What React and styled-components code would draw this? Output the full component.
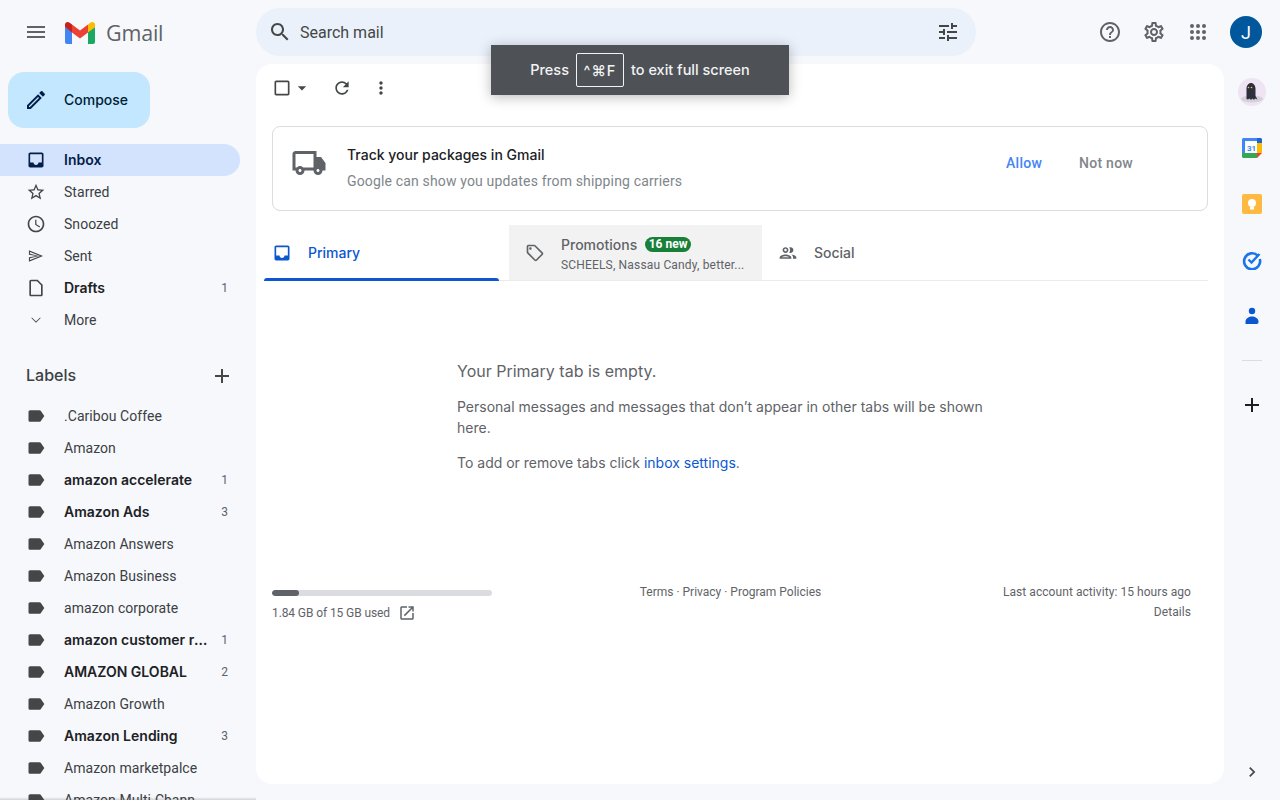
import React from 'react';
import styled, { createGlobalStyle } from 'styled-components';

const FONT = 'Roboto, "Liberation Sans", Arial, sans-serif';
const WIDE_FONT = 'Inter, Roboto, "Liberation Sans", sans-serif';

const PATHS = {
  menu: 'M3 18h18v-2H3v2zm0-5h18v-2H3v2zm0-7v2h18V6H3z',
  search: 'M15.5 14h-.79l-.28-.27C15.41 12.59 16 11.11 16 9.5 16 5.91 13.09 3 9.5 3S3 5.91 3 9.5 5.91 16 9.5 16c1.61 0 3.09-.59 4.23-1.57l.27.28v.79l5 4.99L20.49 19l-4.99-5zm-6 0C7.01 14 5 11.99 5 9.5S7.01 5 9.5 5 14 7.01 14 9.5 11.99 14 9.5 14z',
  tune: 'M3 17v2h6v-2H3zM3 5v2h10V5H3zm10 16v-2h8v-2h-8v-2h-2v6h2zM7 9v2H3v2h4v2h2V9H7zm14 4v-2H11v2h10zm-6-4h2V7h4V5h-4V3h-2v6z',
  help: 'M11 18h2v-2h-2v2zm1-16C6.48 2 2 6.48 2 12s4.48 10 10 10 10-4.48 10-10S17.52 2 12 2zm0 18c-4.41 0-8-3.59-8-8s3.59-8 8-8 8 3.59 8 8-3.59 8-8 8zm0-14c-2.21 0-4 1.79-4 4h2c0-1.1.9-2 2-2s2 .9 2 2c0 2-3 1.75-3 5h2c0-2.25 3-2.5 3-5 0-2.21-1.79-4-4-4z',
  settings: 'M19.43 12.98c.04-.32.07-.64.07-.98 0-.34-.03-.66-.07-.98l2.11-1.65c.19-.15.24-.42.12-.64l-2-3.46c-.09-.16-.26-.25-.44-.25-.06 0-.12.01-.17.03l-2.49 1c-.52-.4-1.08-.73-1.69-.98l-.38-2.65C14.46 2.18 14.25 2 14 2h-4c-.25 0-.46.18-.49.42l-.38 2.65c-.61.25-1.17.59-1.69.98l-2.49-1c-.06-.02-.12-.03-.18-.03-.17 0-.34.09-.43.25l-2 3.46c-.13.22-.07.49.12.64l2.11 1.65c-.04.32-.07.65-.07.98 0 .33.03.66.07.98l-2.11 1.65c-.19.15-.24.42-.12.64l2 3.46c.09.16.26.25.44.25.06 0 .12-.01.17-.03l2.49-1c.52.4 1.08.73 1.69.98l.38 2.65c.03.24.24.42.49.42h4c.25 0 .46-.18.49-.42l.38-2.65c.61-.25 1.17-.59 1.69-.98l2.49 1c.06.02.12.03.18.03.17 0 .34-.09.43-.25l2-3.46c.12-.22.07-.49-.12-.64l-2.11-1.65zm-1.98-1.71c.04.31.05.52.05.73 0 .21-.02.43-.05.73l-.14 1.13.89.7 1.08.84-.7 1.21-1.27-.51-1.04-.42-.9.68c-.43.32-.84.56-1.25.73l-1.06.43-.16 1.13-.2 1.35h-1.4l-.19-1.35-.16-1.13-1.06-.43c-.43-.18-.83-.41-1.23-.71l-.91-.7-1.06.43-1.27.51-.7-1.21 1.08-.84.89-.7-.14-1.13c-.03-.31-.05-.54-.05-.74s.02-.43.05-.73l.14-1.13-.89-.7-1.08-.84.7-1.21 1.27.51 1.04.42.9-.68c.43-.32.84-.56 1.25-.73l1.06-.43.16-1.13.2-1.35h1.39l.19 1.35.16 1.13 1.06.43c.43.18.83.41 1.23.71l.91.7 1.06-.43 1.27-.51.7 1.21-1.07.85-.89.7.14 1.13zM12 8c-2.21 0-4 1.79-4 4s1.79 4 4 4 4-1.79 4-4-1.79-4-4-4zm0 6c-1.1 0-2-.9-2-2s.9-2 2-2 2 .9 2 2-.9 2-2 2z',
  edit: 'M3 17.25V21h3.75L17.81 9.94l-3.75-3.75L3 17.25zM5.92 19H5v-.92l9.06-9.06.92.92L5.92 19zM20.71 5.63l-2.34-2.34c-.2-.2-.45-.29-.71-.29s-.51.1-.7.29l-1.83 1.83 3.75 3.75 1.83-1.83c.39-.39.39-1.02 0-1.41z',
  inbox: 'M19 3H5c-1.1 0-2 .9-2 2v14c0 1.1.9 2 2 2h14c1.1 0 2-.9 2-2V5c0-1.1-.9-2-2-2zm0 12h-4c0 1.66-1.35 3-3 3s-3-1.34-3-3H4.99V5H19v10z',
  star: 'M22 9.24l-7.19-.62L12 2 9.19 8.63 2 9.24l5.46 4.73L5.82 21 12 17.27 18.18 21l-1.63-7.03L22 9.24zM12 15.4l-3.76 2.27 1-4.28-3.32-2.88 4.38-.38L12 6.1l1.71 4.04 4.38.38-3.32 2.88 1 4.28L12 15.4z',
  clock: 'M11.99 2C6.47 2 2 6.48 2 12s4.47 10 9.99 10C17.52 22 22 17.52 22 12S17.52 2 11.99 2zM12 20c-4.42 0-8-3.58-8-8s3.58-8 8-8 8 3.58 8 8-3.58 8-8 8zm.5-13H11v6l5.25 3.15.75-1.23-4.5-2.67z',
  sent: 'M3.5 5.200v5.300L12.500 12l-9 1.500v5.300L20.500 12zM4.800 7.200L16.800 12 4.800 16.800v-2.200l11-2.600-11-2.600z',
  draft: 'M14 2H6c-1.1 0-2 .9-2 2v16c0 1.1.9 2 2 2h12c1.1 0 2-.9 2-2V8l-6-6zm4 18H6V4h7.17L18 8.83V20z',
  more: 'M16.9 8.9L12 13.8 7.1 8.9 6.4 9.6 12 15.2 17.6 9.6z',
  label: 'M17.63 5.84C17.27 5.33 16.67 5 16 5L5 5.01C3.9 5.01 3 5.9 3 7v10c0 1.1.9 1.99 2 1.99L16 19c.67 0 1.27-.33 1.63-.84L22 12l-4.37-6.16z',
  add: 'M19 13h-6v6h-2v-6H5v-2h6V5h2v6h6v2z',
  caret: 'M7 10l5 5 5-5z',
  refresh: 'M17.65 6.35C16.2 4.9 14.21 4 12 4c-4.42 0-7.99 3.58-7.99 8s3.57 8 7.99 8c3.73 0 6.84-2.55 7.73-6h-2.08c-.82 2.33-3.04 4-5.65 4-3.31 0-6-2.69-6-6s2.69-6 6-6c1.66 0 3.14.69 4.22 1.78L13 11h7V4l-2.35 2.35z',
  vert: 'M12 8c1.1 0 2-.9 2-2s-.9-2-2-2-2 .9-2 2 .9 2 2 2zm0 2c-1.1 0-2 .9-2 2s.9 2 2 2 2-.9 2-2-.9-2-2-2zm0 6c-1.1 0-2 .9-2 2s.9 2 2 2 2-.9 2-2-.9-2-2-2z',
  checkbox: 'M19 5v14H5V5h14m0-2H5c-1.1 0-2 .9-2 2v14c0 1.1.9 2 2 2h14c1.1 0 2-.9 2-2V5c0-1.1-.9-2-2-2z',
  truck: 'M20 8h-3V4H3c-1.1 0-2 .9-2 2v11h2c0 1.66 1.34 3 3 3s3-1.34 3-3h6c0 1.66 1.34 3 3 3s3-1.34 3-3h2v-5l-3-4zM6 18c-.55 0-1-.45-1-1s.45-1 1-1 1 .45 1 1-.45 1-1 1zm2.22-3c-.55-.61-1.33-1-2.22-1s-1.67.39-2.22 1H3V6h12v9H8.22zM18 18c-.55 0-1-.45-1-1s.45-1 1-1 1 .45 1 1-.45 1-1 1z',
  tag: 'M21.41 11.41l-8.83-8.83C12.21 2.21 11.7 2 11.17 2H4C2.9 2 2 2.9 2 4v7.17c0 .53.21 1.04.59 1.41l8.83 8.83c.78.78 2.05.78 2.83 0l7.17-7.17c.78-.78.78-2.04-.01-2.83zM12.83 20L4 11.17V4h7.17L20 12.83 12.83 20zM6.5 5C7.33 5 8 5.67 8 6.5S7.33 8 6.5 8 5 7.33 5 6.5 5.67 5 6.5 5z',
  people: 'M9 13.750c-2.340 0-7 1.170-7 3.500V19h14v-1.750c0-2.330-4.660-3.500-7-3.500zM4.340 17c.84-.58 2.870-1.250 4.660-1.250s3.820.67 4.660 1.250H4.340zM9 12c1.930 0 3.500-1.570 3.500-3.500S10.930 5 9 5 5.500 6.570 5.500 8.500 7.070 12 9 12zm0-5c.83 0 1.500.67 1.500 1.500S9.830 10 9 10s-1.500-.67-1.500-1.500S8.170 7 9 7zm7.040 6.810c1.160.84 1.960 1.960 1.960 3.440V19h4v-1.750c0-2.020-3.500-3.170-5.960-3.440zM15 12c1.930 0 3.500-1.570 3.500-3.500S16.930 5 15 5c-.54 0-1.040.13-1.500.35.63.89 1 1.980 1 3.150s-.37 2.260-1 3.150c.46.220.96.350 1.500.350z',
  external: 'M19 19H5V5h7V3H5c-1.11 0-2 .9-2 2v14c0 1.1.89 2 2 2h14c1.1 0 2-.9 2-2v-7h-2v7zM14 3v2h3.59l-9.83 9.83 1.41 1.41L19 6.41V10h2V3h-7z',
  chevron: 'M10 6L8.59 7.41 13.17 12l-4.58 4.59L10 18l6-6z',
};

const GlobalStyle = createGlobalStyle`
  html, body {
    margin: 0;
    height: 100%;
    overflow: hidden;
    background: #f6f8fc;
    font-family: ${FONT};
    color: #202124;
  }
`;

const Svg = styled.svg`
  display: block;
  flex: none;
  fill: ${(p) => p.$color || '#5f6368'};
`;

const Icon = ({ name, size = 24, color }) => (
  <Svg viewBox="0 0 24 24" width={size} height={size} $color={color}>
    <path d={PATHS[name]} />
  </Svg>
);

const Page = styled.div`
  position: relative;
  width: 1280px;
  height: 800px;
  display: flex;
  flex-direction: column;
  overflow: hidden;
`;

/* top bar */
const TopBar = styled.header`
  height: 64px;
  flex: none;
  display: flex;
  align-items: center;
`;

const Brand = styled.div`
  width: 256px;
  flex: none;
  display: flex;
  align-items: center;
  padding-left: 24px;
  box-sizing: border-box;
`;

const LogoMark = styled.svg`
  display: block;
  margin-left: 17px;
  flex: none;
`;

const BrandName = styled.span`
  margin-left: 11px;
  font-size: 21.5px;
  letter-spacing: -0.2px;
  color: #5f6368;
  font-family: "Open Sans", ${FONT};
`;

const SearchBar = styled.div`
  width: 720px;
  height: 48px;
  flex: none;
  border-radius: 24px;
  background: #eaf1fb;
  display: flex;
  align-items: center;
  padding: 0 16px 0 12px;
  box-sizing: border-box;
`;

const SearchText = styled.span`
  flex: 1;
  margin-left: 8px;
  font-size: 16px;
  color: #444746;
`;

const TopActions = styled.div`
  flex: 1;
  display: flex;
  align-items: center;
  justify-content: flex-end;
  padding-right: 18px;
`;

const ActionButton = styled.div`
  width: 44px;
  height: 44px;
  display: flex;
  align-items: center;
  justify-content: center;
`;

const Avatar = styled.div`
  width: 32px;
  height: 32px;
  margin-left: 10px;
  border-radius: 50%;
  background: #00579c;
  color: #fff;
  font-size: 18px;
  display: flex;
  align-items: center;
  justify-content: center;
`;

/* body */
const Body = styled.div`
  flex: 1;
  min-height: 0;
  display: flex;
`;

const Sidebar = styled.nav`
  position: relative;
  width: 256px;
  flex: none;
  overflow: hidden;

  &::after {
    content: '';
    position: absolute;
    left: 0;
    right: 0;
    bottom: 0;
    height: 3px;
    background: linear-gradient(rgba(60, 64, 67, 0), rgba(60, 64, 67, 0.2));
  }
`;

const Compose = styled.div`
  width: 142px;
  height: 56px;
  margin: 8px 0 16px 8px;
  border-radius: 16px;
  background: #c2e7ff;
  display: flex;
  align-items: center;
  padding-left: 16px;
  box-sizing: border-box;
  font-family: ${WIDE_FONT};
  font-size: 14px;
  font-weight: 500;
  color: #001d35;
`;

const ComposeLabel = styled.span`
  margin-left: 16px;
  padding-bottom: 2px;
`;

const RowText = styled.span`
  flex: 1;
  min-width: 0;
  max-width: 147px;
  margin-left: 18px;
  white-space: nowrap;
  overflow: hidden;
  text-overflow: ellipsis;
`;

const Row = styled.div`
  width: 240px;
  height: 32px;
  display: flex;
  align-items: center;
  padding: 0 12px 0 26px;
  box-sizing: border-box;
  border-radius: 0 16px 16px 0;
  font-family: ${(p) => (p.$bold ? WIDE_FONT : FONT)};
  font-size: 14px;
  font-weight: ${(p) => (p.$bold ? 600 : 400)};
  letter-spacing: ${(p) => (p.$bold ? 0 : '0.05px')};
  color: ${(p) => (p.$active ? '#041e49' : p.$bold ? '#202124' : '#3c4043')};
  background: ${(p) => (p.$active ? '#d3e3fd' : 'transparent')};

  ${RowText} {
    padding-bottom: ${(p) => (p.$bold ? 2 : 0)}px;
  }
`;

const RowCount = styled.span`
  margin-left: auto;
  font-family: ${FONT};
  font-size: 12px;
  font-weight: 400;
  color: #5f6368;
`;

const LabelsHeader = styled.div`
  width: 240px;
  height: 32px;
  margin: 24px 0 8px;
  padding: 0 6px 0 26px;
  box-sizing: border-box;
  display: flex;
  align-items: center;
  justify-content: space-between;
  font-family: ${WIDE_FONT};
  font-size: 16px;
  font-weight: 500;
  color: #3c4043;
`;

const LabelsTitle = styled.span`
  padding-bottom: 2px;
`;

/* main card */
const Main = styled.main`
  width: 968px;
  height: 720px;
  flex: none;
  background: #fff;
  border-radius: 16px;
  padding: 0 16px;
  box-sizing: border-box;
`;

const Toolbar = styled.div`
  height: 48px;
  display: flex;
  align-items: center;
`;

const ToolButton = styled.div`
  display: flex;
  align-items: center;
  margin-left: ${(p) => p.$gap || 0}px;
`;

const PackageCard = styled.div`
  margin-top: 14px;
  height: 85px;
  border: 1px solid #dadce0;
  border-radius: 8px;
  box-sizing: border-box;
  display: flex;
  align-items: center;
  padding: 0 74px 0 18px;
`;

const TruckWrap = styled.div`
  margin-bottom: 12px;
`;

const CardText = styled.div`
  flex: 1;
  margin-left: 20px;
  display: flex;
  flex-direction: column;
  gap: 9px;
`;

const CardTitle = styled.div`
  font-family: ${WIDE_FONT};
  font-size: 14px;
  line-height: 15px;
  margin-bottom: 2px;
  font-weight: 500;
  color: #202124;
`;

const CardSub = styled.div`
  font-size: 14px;
  line-height: 17px;
  letter-spacing: 0.16px;
  color: #80868b;
`;

const CardAction = styled.span`
  margin: 0 0 12px ${(p) => p.$gap || 0}px;
  font-size: 14px;
  font-weight: 500;
  letter-spacing: 0.25px;
  color: ${(p) => (p.$primary ? '#4285f4' : '#80868b')};
`;

const Tabs = styled.div`
  margin: 14px 0 0 -8px;
  height: 56px;
  box-sizing: border-box;
  display: flex;
  border-bottom: 1px solid #e8eaed;
`;

const PrimaryTab = styled.div`
  position: relative;
  width: 235px;
  height: 56px;
  flex: none;
  display: flex;
  align-items: center;
  padding: 0 0 1px 8px;
  box-sizing: border-box;
  color: #0b57d0;
  font-family: ${WIDE_FONT};
  font-size: 14px;
  font-weight: 500;

  &::after {
    content: '';
    position: absolute;
    left: 0;
    right: 0;
    bottom: 0;
    height: 3px;
    background: #0b57d0;
    border-radius: 3px 3px 0 0;
  }
`;

const TabName = styled.span`
  margin-left: 16px;
`;

const PromoTab = styled.div`
  width: 253px;
  height: 55px;
  flex: none;
  margin-left: 10px;
  background: #f2f2f2;
  display: flex;
  align-items: center;
  padding-left: 16px;
  box-sizing: border-box;
`;

const PromoText = styled.div`
  margin-left: 16px;
  padding-top: 3px;
  min-width: 0;
  display: flex;
  flex-direction: column;
  gap: 3px;
`;

const PromoHead = styled.div`
  display: flex;
  align-items: center;
  font-family: ${WIDE_FONT};
  font-size: 14px;
  line-height: 18px;
  font-weight: 500;
  color: #5f6368;
`;

const NewBadge = styled.span`
  margin-left: 8px;
  height: 15px;
  padding: 0 3.5px;
  border-radius: 8px;
  background: #188038;
  color: #fff;
  font-family: ${FONT};
  font-size: 12px;
  line-height: 15px;
  font-weight: 700;
`;

const PromoSub = styled.div`
  width: 190px;
  font-size: 12px;
  line-height: 16px;
  letter-spacing: 0.17px;
  color: #5f6368;
  white-space: nowrap;
  overflow: hidden;
`;

const SocialTab = styled.div`
  height: 55px;
  padding-left: 16px;
  display: flex;
  align-items: center;
  font-family: ${WIDE_FONT};
  font-size: 14px;
  font-weight: 500;
  color: #5f6368;
`;

const Empty = styled.div`
  margin: 80px 0 0 185px;
  width: 540px;
  color: #5f6368;
  font-family: ${WIDE_FONT};
`;

const EmptyTitle = styled.div`
  font-size: 16px;
  line-height: 20px;
  margin-bottom: 15px;
`;

const EmptyText = styled.p`
  margin: 0 0 14px;
  font-size: 14px;
  line-height: 21px;
`;

const Link = styled.span`
  color: #0b57d0;
`;

const Footer = styled.footer`
  margin-top: 110px;
  display: flex;
  justify-content: space-between;
  font-size: 12px;
  color: #5f6368;
`;

const Storage = styled.div`
  width: 220px;
`;

const StorageTrack = styled.div`
  height: 6px;
  margin-top: 7px;
  border-radius: 3px;
  background: #dadce0;
  overflow: hidden;
`;

const StorageFill = styled.div`
  height: 100%;
  border-radius: 3px;
  background: #5f6368;
`;

const StorageLine = styled.div`
  margin-top: 8px;
  display: flex;
  align-items: center;
  gap: 8px;
  letter-spacing: -0.1px;
`;

const FooterLinks = styled.div`
  margin: -1px 0 0 -34px;
  line-height: 20px;
`;

const FooterRight = styled.div`
  margin-right: 17px;
  margin-top: -1px;
  text-align: right;
  line-height: 20px;
  letter-spacing: 0.06px;
`;

/* right rail */
const Rail = styled.aside`
  flex: 1;
  height: 736px;
  display: flex;
  flex-direction: column;
  align-items: center;
`;

const RailItem = styled.div`
  height: 56px;
  width: 100%;
  flex: none;
  display: flex;
  align-items: center;
  justify-content: center;
`;

const RailDivider = styled.div`
  width: 20px;
  height: 1px;
  margin: 16px 0;
  background: #dadce0;
`;

const RailPlus = styled.div`
  height: 56px;
  display: flex;
  align-items: center;
`;

const RailBottom = styled.div`
  margin-top: auto;
  height: 56px;
  display: flex;
  align-items: center;
`;

/* browser fullscreen hint, sits over the page */
const FullscreenHint = styled.div`
  position: absolute;
  left: 491px;
  top: 45px;
  width: 298px;
  height: 50px;
  padding-bottom: 2px;
  box-sizing: border-box;
  background: #4e5156;
  box-shadow: 0 2px 12px rgba(0, 0, 0, 0.28);
  display: flex;
  align-items: center;
  justify-content: center;
  gap: 7px;
  color: #f1f3f4;
  font-family: Inter, ${FONT};
  font-size: 14.5px;
  font-weight: 500;
`;

const Kbd = styled.span`
  width: 48px;
  height: 34px;
  margin-top: 2px;
  box-sizing: border-box;
  border: 1px solid #f1f3f4;
  border-radius: 2px;
  display: flex;
  align-items: center;
  justify-content: center;
  letter-spacing: 1px;
  font-family: Inter, "DejaVu Sans", sans-serif;
`;

const GmailLogo = () => (
  <LogoMark width="30" height="23" viewBox="0 0 30 23">
    <path d="M0 6v15c0 1.1.9 2 2 2h5V10.5z" fill="#4285f4" />
    <path d="M23 10.500V23h5c1.100 0 2-.9 2-2V6z" fill="#1aa863" />
    <path d="M7 3.500v8l8 6 8-6v-8l-8 6z" fill="#ea4335" />
    <path d="M0 3.500V6l7 5.500v-8L4.400 1.500C2.500.1 0 1.300 0 3.500z" fill="#c5221f" />
    <path d="M23 3.500v8L30 6V3.500c0-2.200-2.500-3.400-4.400-2z" fill="#fbbc04" />
  </LogoMark>
);

const AppsIcon = () => (
  <Svg viewBox="0 0 24 24" width="24" height="24">
    {[6, 12, 18].map((y) => [6, 12, 18].map((x) => (
      <circle key={`${x}-${y}`} cx={x} cy={y} r="2" />
    )))}
  </Svg>
);

const Creature = () => (
  <svg width="28" height="28" viewBox="0 0 28 28">
    <circle cx="14" cy="14" r="14" fill="#efe4f4" />
    <ellipse cx="14" cy="21" rx="11" ry="3.500" fill="#d5d0da" />
    <path d="M8.500 21V10.500C8.500 7.500 10.500 5 13 5s4.500 2.500 4.500 5.500V18l2 3.500-2.500-1-1 1.500-1.500-1.500-1.500 1.500-1.500-1.500-1.500 1z" fill="#2e2f3c" />
    <circle cx="10.500" cy="9.500" r=".8" fill="#f5c542" />
    <circle cx="13.500" cy="9.500" r=".8" fill="#f5c542" />
  </svg>
);

const CalendarIcon = () => (
  <svg width="20" height="20" viewBox="0 0 20 20">
    <path d="M1.500 0h15.500v3H3v14H0V1.500C0 .7.700 0 1.500 0z" fill="#4285f4" />
    <path d="M15 0h3.500c.8 0 1.500.7 1.500 1.500V5h-5z" fill="#1967d2" />
    <rect x="15" y="5" width="5" height="10" fill="#fbbc04" />
    <path d="M0 15h15v5H1.500C.7 20 0 19.300 0 18.500z" fill="#34a853" />
    <path d="M15 15h5l-5 5z" fill="#ea4335" />
    <rect x="4" y="4" width="11" height="11" fill="#fff" />
    <text x="9.500" y="12.500" fontSize="8" fontWeight="700" fill="#4285f4" textAnchor="middle" fontFamily={FONT}>31</text>
  </svg>
);

const KeepIcon = () => (
  <svg width="20" height="20" viewBox="0 0 20 20">
    <rect width="20" height="20" rx="2" fill="#fdb940" />
    <circle cx="10" cy="9" r="4" fill="#fff" />
    <rect x="8" y="13" width="4" height="2.500" fill="#fff" />
  </svg>
);

const TasksIcon = () => (
  <svg width="20" height="20" viewBox="0 0 20 20">
    <path d="M15.800 5.600A8 8 0 1 0 17.800 9" fill="none" stroke="#1a73e8" strokeWidth="2.600" />
    <path d="M6.500 9.500l3 3 8-8.500" fill="none" stroke="#1a73e8" strokeWidth="2.400" />
  </svg>
);

const ContactsIcon = () => (
  <svg width="20" height="20" viewBox="0 0 20 20">
    <circle cx="10" cy="5" r="3.200" fill="#0b57d0" />
    <path d="M3.500 18v-2.500C3.500 12.500 7 10.500 10 10.500s6.500 2 6.500 5V16c0 1.500-1 2-2.500 2z" fill="#0b57d0" />
  </svg>
);

const MAIN_NAV = [
  { icon: 'star', text: 'Starred' },
  { icon: 'clock', text: 'Snoozed' },
  { icon: 'sent', text: 'Sent' },
  { icon: 'draft', text: 'Drafts', count: 1, bold: true },
  { icon: 'more', text: 'More' },
];

const LABELS = [
  { text: '.Caribou Coffee' },
  { text: 'Amazon' },
  { text: 'amazon accelerate', count: 1 },
  { text: 'Amazon Ads', count: 3 },
  { text: 'Amazon Answers' },
  { text: 'Amazon Business' },
  { text: 'amazon corporate' },
  { text: 'amazon customer relations', count: 1 },
  { text: 'AMAZON GLOBAL', count: 2 },
  { text: 'Amazon Growth' },
  { text: 'Amazon Lending', count: 3 },
  { text: 'Amazon marketpalce' },
  { text: 'Amazon Multi-Channel Fulfillment' },
];

const App = () => (
  <Page>
    <GlobalStyle />
    <TopBar>
      <Brand>
        <Icon name="menu" />
        <GmailLogo />
        <BrandName>Gmail</BrandName>
      </Brand>
      <SearchBar>
        <Icon name="search" color="#444746" />
        <SearchText>Search mail</SearchText>
        <Icon name="tune" color="#444746" />
      </SearchBar>
      <TopActions>
        <ActionButton><Icon name="help" /></ActionButton>
        <ActionButton><Icon name="settings" /></ActionButton>
        <ActionButton><AppsIcon /></ActionButton>
        <Avatar>J</Avatar>
      </TopActions>
    </TopBar>

    <Body>
      <Sidebar>
        <Compose>
          <Icon name="edit" color="#041e49" />
          <ComposeLabel>Compose</ComposeLabel>
        </Compose>
        <Row $active $bold>
          <Icon name="inbox" size={20} color="#041e49" />
          <RowText>Inbox</RowText>
        </Row>
        {MAIN_NAV.map((item) => (
          <Row key={item.text} $bold={item.bold}>
            <Icon name={item.icon} size={20} color="#444746" />
            <RowText>{item.text}</RowText>
            {item.count && <RowCount>{item.count}</RowCount>}
          </Row>
        ))}
        <LabelsHeader>
          <LabelsTitle>Labels</LabelsTitle>
          <Icon name="add" color="#444746" />
        </LabelsHeader>
        {LABELS.map((item) => (
          <Row key={item.text} $bold={!!item.count}>
            <Icon name="label" size={20} color="#444746" />
            <RowText>{item.text}</RowText>
            {item.count && <RowCount>{item.count}</RowCount>}
          </Row>
        ))}
      </Sidebar>

      <Main>
        <Toolbar>
          <ToolButton>
            <Icon name="checkbox" size={20} color="#444746" />
            <Icon name="caret" size={20} color="#444746" />
          </ToolButton>
          <ToolButton $gap={20}><Icon name="refresh" size={20} color="#444746" /></ToolButton>
          <ToolButton $gap={19}><Icon name="vert" size={20} color="#444746" /></ToolButton>
        </Toolbar>

        <PackageCard>
          <TruckWrap><Icon name="truck" size={36} /></TruckWrap>
          <CardText>
            <CardTitle>Track your packages in Gmail</CardTitle>
            <CardSub>Google can show you updates from shipping carriers</CardSub>
          </CardText>
          <CardAction $primary>Allow</CardAction>
          <CardAction $gap={37}>Not now</CardAction>
        </PackageCard>

        <Tabs>
          <PrimaryTab>
            <Icon name="inbox" size={20} color="#0b57d0" />
            <TabName>Primary</TabName>
          </PrimaryTab>
          <PromoTab>
            <Icon name="tag" size={20} />
            <PromoText>
              <PromoHead>
                Promotions
                <NewBadge>16 new</NewBadge>
              </PromoHead>
              <PromoSub>SCHEELS, Nassau Candy, better...</PromoSub>
            </PromoText>
          </PromoTab>
          <SocialTab>
            <Icon name="people" size={20} />
            <TabName>Social</TabName>
          </SocialTab>
        </Tabs>

        <Empty>
          <EmptyTitle>Your Primary tab is empty.</EmptyTitle>
          <EmptyText>Personal messages and messages that don’t appear in other tabs will be shown here.</EmptyText>
          <EmptyText>To add or remove tabs click <Link>inbox settings</Link>.</EmptyText>
        </Empty>

        <Footer>
          <Storage>
            <StorageTrack>
              <StorageFill style={{ width: `${(1.84 / 15) * 100}%` }} />
            </StorageTrack>
            <StorageLine>
              1.84 GB of 15 GB used
              <Icon name="external" size={18} />
            </StorageLine>
          </Storage>
          <FooterLinks>Terms · Privacy · Program Policies</FooterLinks>
          <FooterRight>
            <div>Last account activity: 15 hours ago</div>
            <div>Details</div>
          </FooterRight>
        </Footer>
      </Main>

      <Rail>
        <RailItem><Creature /></RailItem>
        <RailItem><CalendarIcon /></RailItem>
        <RailItem><KeepIcon /></RailItem>
        <RailItem><TasksIcon /></RailItem>
        <RailItem><ContactsIcon /></RailItem>
        <RailDivider />
        <RailPlus><Icon name="add" color="#1f1f1f" /></RailPlus>
        <RailBottom><Icon name="chevron" size={20} color="#444746" /></RailBottom>
      </Rail>
    </Body>

    <FullscreenHint>
      Press
      <Kbd>^⌘F</Kbd>
      to exit full screen
    </FullscreenHint>
  </Page>
);

export default App;
